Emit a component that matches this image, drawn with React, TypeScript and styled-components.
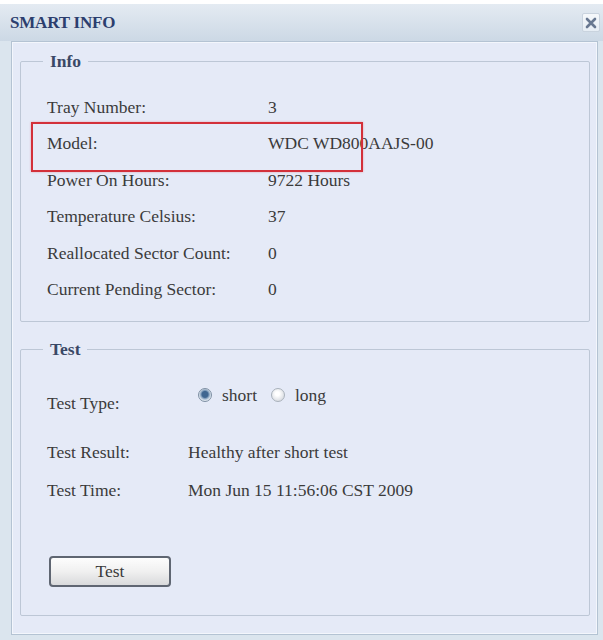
import React from "react";
import styled, { createGlobalStyle } from "styled-components";

const GlobalStyle = createGlobalStyle`
  html, body {
    margin: 0;
    padding: 0;
    background: #ffffff;
  }
  body {
    font-family: "Liberation Serif", "Times New Roman", serif;
  }
`;

const Window = styled.div`
  margin-top: 4px;
  width: 603px;
  height: 636px;
  box-sizing: border-box;
  background: #dbe5ee;
  display: flex;
  flex-direction: column;
`;

const TitleBar = styled.div`
  height: 37px;
  flex: none;
  display: flex;
  align-items: center;
  justify-content: space-between;
  padding: 0 3px 0 10px;
  background: linear-gradient(#e4ebf2, #ccd8e5);
`;

const Title = styled.h1`
  margin: 0;
  font-size: 17px;
  font-weight: bold;
  letter-spacing: -0.2px;
  color: #2c3e6e;
`;

const CloseButton = styled.button`
  width: 18px;
  height: 19px;
  padding: 0;
  display: flex;
  align-items: center;
  justify-content: center;
  background: linear-gradient(#f5f8fb, #e6edf4);
  border: 1px solid #c9d3de;
  border-radius: 2px;
  cursor: pointer;
`;

const Panel = styled.div`
  margin: 0 5px 0 11px;
  padding: 9px 7px 18px 8px;
  background: #e5eaf7;
  border: 1px solid #b4c3d3;
  box-shadow: inset 0 0 0 1px #f3f6fc;
`;

const Group = styled.fieldset<{ $gap?: number; $pt: number; $pb: number }>`
  margin: ${(p) => p.$gap ?? 0}px 0 0 0;
  min-width: 0;
  padding: ${(p) => p.$pt}px 0 ${(p) => p.$pb}px 26px;
  border: 1px solid #bdc7d6;
  border-radius: 2px;
`;

const Legend = styled.legend`
  margin-left: -4px;
  padding: 0 7px;
  font-size: 17.5px;
  line-height: 20px;
  font-weight: bold;
  color: #3a4866;
`;

const InfoRow = styled.div`
  position: relative;
  height: 36.5px;
  display: grid;
  grid-template-columns: 221px 1fr;
  align-items: center;
  font-size: 17.5px;
  color: #3b3b3b;
`;

const Highlight = styled.span`
  position: absolute;
  left: -16px;
  top: -4px;
  width: 332px;
  height: 50px;
  box-sizing: border-box;
  border: 2px solid #d3303a;
  box-shadow: 0 0 2px rgba(230, 80, 90, 0.45);
  pointer-events: none;
`;

const TestRow = styled.div<{ $h: number; $mt?: number }>`
  height: ${(p) => p.$h}px;
  margin-top: ${(p) => p.$mt ?? 0}px;
  display: grid;
  grid-template-columns: 141px 1fr;
  align-items: center;
  font-size: 17.5px;
  color: #3b3b3b;
`;

const RadioGroup = styled.div`
  display: flex;
  align-items: center;
  margin: 0 0 16px 10px;
`;

const RadioOption = styled.label`
  display: flex;
  align-items: center;
  gap: 10px;
  margin-right: 14px;
`;

const RadioDot = styled.span<{ $on?: boolean }>`
  width: 14px;
  height: 14px;
  box-sizing: border-box;
  border-radius: 50%;
  border: 1px solid ${(p) => (p.$on ? "#7e8fa3" : "#a9b1bb")};
  background: ${(p) =>
    p.$on
      ? "radial-gradient(circle at 50% 45%, #3f6690 0 3px, #7f9cba 4px, #dfe7ef 6px)"
      : "radial-gradient(circle at 45% 40%, #ffffff 0 2px, #dcdfe4 7px)"};
`;

const ActionButton = styled.button`
  margin: 47px 0 0 2px;
  width: 122px;
  height: 31px;
  padding: 0;
  border: 2px solid #5f6672;
  border-radius: 4px;
  background: linear-gradient(#fdfdfd, #f0f0f0 50%, #d9dadc);
  font-family: "Liberation Serif", "Times New Roman", serif;
  font-size: 17.5px;
  color: #3a3a3a;
  cursor: pointer;
`;

const info: [string, string][] = [
  ["Tray Number:", "3"],
  ["Model:", "WDC WD800AAJS-00"],
  ["Power On Hours:", "9722 Hours"],
  ["Temperature Celsius:", "37"],
  ["Reallocated Sector Count:", "0"],
  ["Current Pending Sector:", "0"],
];

export default function App() {
  return (
    <>
      <GlobalStyle />
      <Window>
        <TitleBar>
          <Title>SMART INFO</Title>
          <CloseButton aria-label="Close">
            <svg width="12" height="12" viewBox="0 0 12 12">
              <path
                d="M2 2 L10 10 M10 2 L2 10"
                stroke="#687891"
                strokeWidth="2.6"
                strokeLinecap="round"
              />
            </svg>
          </CloseButton>
        </TitleBar>
        <Panel>
          <Group $pt={18} $pb={13}>
            <Legend>Info</Legend>
            {info.map(([label, value]) => (
              <InfoRow key={label}>
                {label === "Model:" && <Highlight />}
                <span>{label}</span>
                <span>{value}</span>
              </InfoRow>
            ))}
          </Group>
          <Group $gap={17} $pt={24} $pb={28}>
            <Legend>Test</Legend>
            <TestRow $h={40}>
              <span>Test Type:</span>
              <RadioGroup>
                <RadioOption>
                  <RadioDot $on />
                  short
                </RadioOption>
                <RadioOption>
                  <RadioDot />
                  long
                </RadioOption>
              </RadioGroup>
            </TestRow>
            <TestRow $h={38} $mt={10}>
              <span>Test Result:</span>
              <span>Healthy after short test</span>
            </TestRow>
            <TestRow $h={38}>
              <span>Test Time:</span>
              <span>Mon Jun 15 11:56:06 CST 2009</span>
            </TestRow>
            <ActionButton>Test</ActionButton>
          </Group>
        </Panel>
      </Window>
    </>
  );
}
